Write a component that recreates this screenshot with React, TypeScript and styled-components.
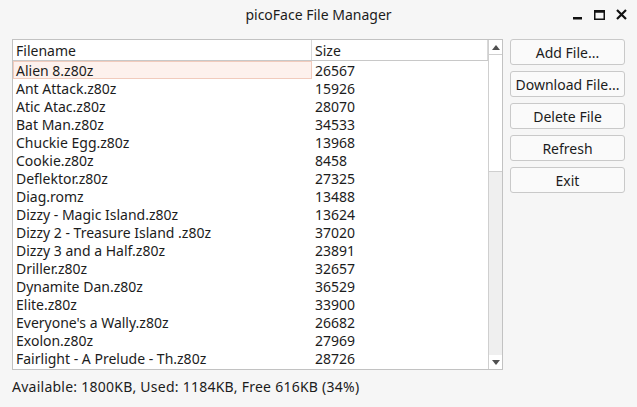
import styled, { createGlobalStyle } from 'styled-components';

const GlobalStyle = createGlobalStyle`
  html, body {
    margin: 0;
    padding: 0;
    background: #f6f6f6;
  }
  body {
    font-family: "Noto Sans", "DejaVu Sans", sans-serif;
    font-size: 13px;
    color: #1c1c1c;
  }
`;

const files: [string, number][] = [
  ['Alien 8.z80z', 26567],
  ['Ant Attack.z80z', 15926],
  ['Atic Atac.z80z', 28070],
  ['Bat Man.z80z', 34533],
  ['Chuckie Egg.z80z', 13968],
  ['Cookie.z80z', 8458],
  ['Deflektor.z80z', 27325],
  ['Diag.romz', 13488],
  ['Dizzy - Magic Island.z80z', 13624],
  ['Dizzy 2 - Treasure Island .z80z', 37020],
  ['Dizzy 3 and a Half.z80z', 23891],
  ['Driller.z80z', 32657],
  ['Dynamite Dan.z80z', 36529],
  ['Elite.z80z', 33900],
  ["Everyone's a Wally.z80z", 26682],
  ['Exolon.z80z', 27969],
  ['Fairlight - A Prelude - Th.z80z', 28726],
];

const Window = styled.div`
  width: 637px;
  height: 407px;
  display: flex;
  flex-direction: column;
  background: #f6f6f6;
`;

const TitleBar = styled.div`
  height: 29px;
  display: flex;
  align-items: center;
  justify-content: center;
  position: relative;
  font-size: 14px;
`;

const WindowControls = styled.div`
  position: absolute;
  right: 10px;
  top: 9px;
  display: flex;
  gap: 11px;
  align-items: center;
`;

const Body = styled.div`
  display: flex;
  padding: 10px 12px 0 12px;
  gap: 7px;
`;

const ListBox = styled.div`
  width: 489px;
  height: 329px;
  border: 1px solid #c2c2c2;
  background: #fff;
  display: flex;
  overflow: hidden;
`;

const Table = styled.div`
  flex: 1;
  display: flex;
  flex-direction: column;
`;

const HeaderRow = styled.div`
  display: flex;
  height: 20px;
  border-bottom: 1px solid #c8c8c8;
`;

const HeaderCell = styled.div<{ $w?: number }>`
  ${(p) => (p.$w ? `width: ${p.$w}px;` : 'flex: 1;')}
  padding-left: 3px;
  display: flex;
  align-items: center;
  border-right: 1px solid #d8d8d8;
  box-sizing: border-box;
  font-size: 14px;
`;

const Row = styled.div`
  display: flex;
  height: 18px;
`;

const Cell = styled.div<{ $w?: number; $selected?: boolean }>`
  ${(p) => (p.$w ? `width: ${p.$w}px;` : 'flex: 1;')}
  box-sizing: border-box;
  padding-left: 2px;
  display: flex;
  align-items: center;
  font-size: 14px;
  white-space: nowrap;
  border: 1px solid ${(p) => (p.$selected ? '#f1cbbd' : 'transparent')};
  background: ${(p) => (p.$selected ? '#fdf1ed' : 'transparent')};
`;

const ScrollBar = styled.div`
  width: 13px;
  border-left: 1px solid #cfcfcf;
  display: flex;
  flex-direction: column;
  background: #efefef;
`;

const ScrollButton = styled.div`
  height: 14px;
  display: flex;
  align-items: center;
  justify-content: center;
  background: #fff;
`;

const Thumb = styled.div`
  height: 116px;
  background: #fff;
  border-top: 1px solid #cfcfcf;
  border-bottom: 1px solid #cfcfcf;
`;

const Track = styled.div`
  flex: 1;
`;

const ButtonColumn = styled.div`
  display: flex;
  flex-direction: column;
  gap: 6px;
`;

const Button = styled.button`
  width: 115px;
  height: 26px;
  border: 1px solid #c9c9c9;
  border-radius: 3px;
  background: #fafafa;
  font-family: inherit;
  font-size: 14px;
  color: #1c1c1c;
  padding: 0;
`;

const Status = styled.div`
  padding: 7px 12px 0;
  font-size: 14px;
  letter-spacing: 0.25px;
`;

const Arrow = ({ down }: { down?: boolean }) => (
  <svg width="8" height="5" viewBox="0 0 8 5">
    <polygon points={down ? '0,0 8,0 4,5' : '0,5 8,5 4,0'} fill="#505050" />
  </svg>
);

export default function App() {
  return (
    <Window>
      <GlobalStyle />
      <TitleBar>
        picoFace File Manager
        <WindowControls>
          <svg width="10" height="10" viewBox="0 0 10 10">
            <rect x="0" y="7" width="9" height="2.5" fill="#111" />
          </svg>
          <svg width="11" height="10" viewBox="0 0 11 10">
            <rect x="0.75" y="0.75" width="9.5" height="8.5" fill="none" stroke="#111" strokeWidth="1.5" />
            <rect x="0.75" y="0.75" width="9.5" height="2" fill="#111" />
          </svg>
          <svg width="11" height="11" viewBox="0 0 11 11">
            <path d="M1 1 L10 10 M10 1 L1 10" stroke="#111" strokeWidth="2.2" />
          </svg>
        </WindowControls>
      </TitleBar>
      <Body>
        <ListBox>
          <Table>
            <HeaderRow>
              <HeaderCell $w={299}>Filename</HeaderCell>
              <HeaderCell>Size</HeaderCell>
            </HeaderRow>
            {files.map(([name, size], i) => (
              <Row key={name}>
                <Cell $w={299} $selected={i === 0}>{name}</Cell>
                <Cell>{size}</Cell>
              </Row>
            ))}
          </Table>
          <ScrollBar>
            <ScrollButton>
              <Arrow />
            </ScrollButton>
            <Thumb />
            <Track />
            <ScrollButton>
              <Arrow down />
            </ScrollButton>
          </ScrollBar>
        </ListBox>
        <ButtonColumn>
          <Button>Add File...</Button>
          <Button>Download File...</Button>
          <Button>Delete File</Button>
          <Button>Refresh</Button>
          <Button>Exit</Button>
        </ButtonColumn>
      </Body>
      <Status>Available: 1800KB, Used: 1184KB, Free 616KB (34%)</Status>
    </Window>
  );
}
